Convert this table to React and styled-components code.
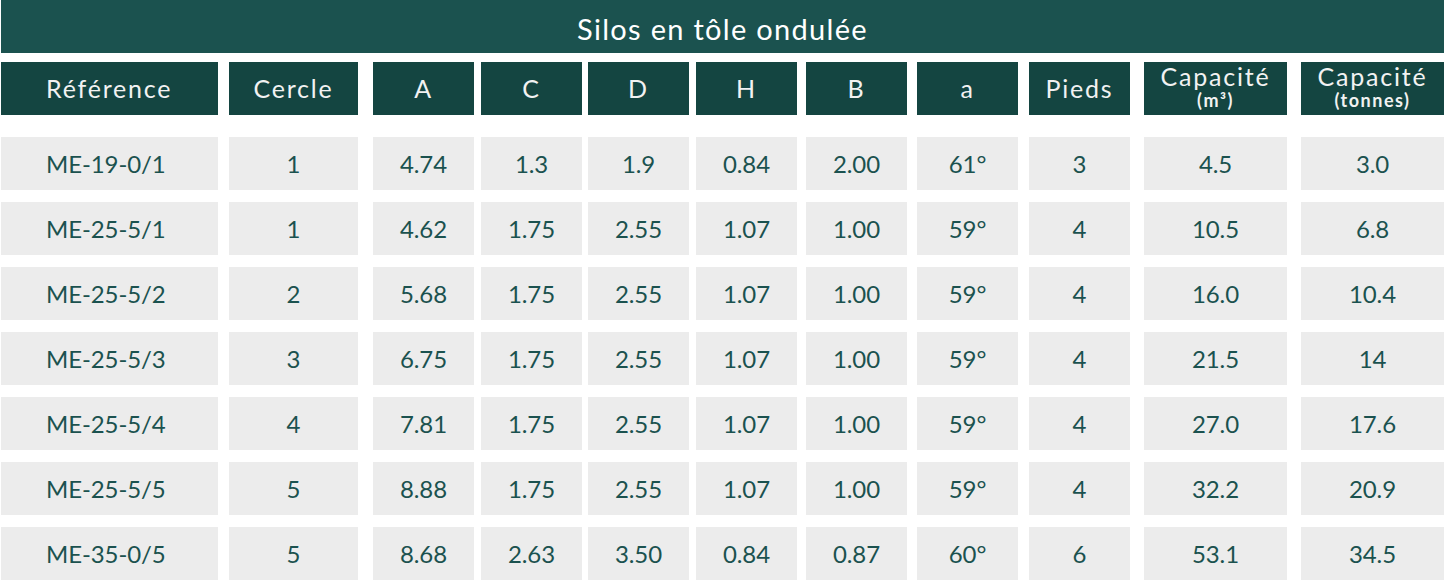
import React from "react";
import styled, { createGlobalStyle } from "styled-components";

const GlobalStyle = createGlobalStyle`
  html, body { margin: 0; padding: 0; background: #ffffff; }
  body { font-family: Lato, "Open Sans", sans-serif; }
`;

const Page = styled.div`
  width: 1443px;
  padding-left: 1px;
  display: flex;
  flex-direction: column;
`;

const TitleBar = styled.div`
  height: 53px;
  background: #1b524f;
  color: #ffffff;
  display: flex;
  align-items: center;
  justify-content: center;
  font-size: 29px;
  letter-spacing: 1.3px;
  padding-top: 4px;
  box-sizing: border-box;
`;

const Table = styled.div`
  display: flex;
  flex-direction: column;
  gap: 12px;
  margin-top: 9px;
`;

const Row = styled.div`
  display: flex;
  height: 53px;
  margin-bottom: ${(p) => (p.$head ? "10px" : "0")};
`;

const Cell = styled.div`
  width: ${(p) => p.$w}px;
  margin-left: ${(p) => p.$gap}px;
  flex: none;
  box-sizing: border-box;
  display: flex;
  flex-direction: column;
  align-items: ${(p) => (p.$left ? "flex-start" : "center")};
  justify-content: center;
  padding-left: ${(p) => (p.$left ? "45px" : "0")};
  line-height: 1;
  white-space: nowrap;
`;

const HeadCell = styled(Cell)`
  background: #144541;
  color: #f2f2f2;
  font-size: 25px;
  letter-spacing: 1.8px;
`;

const DataCell = styled(Cell)`
  background: #ececec;
  color: #1b524f;
  font-size: 24px;
  letter-spacing: -0.1px;
`;

const SubLabel = styled.span`
  font-size: 18px;
  line-height: 18px;
  font-weight: 700;
  letter-spacing: 1.5px;
  margin-top: 2px;
`;

const StackLabel = styled.span`
  margin-top: -4px;
`;

const columns = [
  { w: 217, gap: 0, left: true, label: "Référence" },
  { w: 129, gap: 11, label: "Cercle" },
  { w: 101, gap: 15, label: "A" },
  { w: 101, gap: 7, label: "C" },
  { w: 101, gap: 6, label: "D" },
  { w: 101, gap: 7, label: "H" },
  { w: 101, gap: 9, label: "B" },
  { w: 101, gap: 10, label: "a" },
  { w: 101, gap: 11, label: "Pieds" },
  { w: 143, gap: 14, label: "Capacité", sub: "(m³)" },
  { w: 143, gap: 14, label: "Capacité", sub: "(tonnes)" },
];

const rows = [
  ["ME-19-0/1", "1", "4.74", "1.3", "1.9", "0.84", "2.00", "61°", "3", "4.5", "3.0"],
  ["ME-25-5/1", "1", "4.62", "1.75", "2.55", "1.07", "1.00", "59°", "4", "10.5", "6.8"],
  ["ME-25-5/2", "2", "5.68", "1.75", "2.55", "1.07", "1.00", "59°", "4", "16.0", "10.4"],
  ["ME-25-5/3", "3", "6.75", "1.75", "2.55", "1.07", "1.00", "59°", "4", "21.5", "14"],
  ["ME-25-5/4", "4", "7.81", "1.75", "2.55", "1.07", "1.00", "59°", "4", "27.0", "17.6"],
  ["ME-25-5/5", "5", "8.88", "1.75", "2.55", "1.07", "1.00", "59°", "4", "32.2", "20.9"],
  ["ME-35-0/5", "5", "8.68", "2.63", "3.50", "0.84", "0.87", "60°", "6", "53.1", "34.5"],
];

export default function App() {
  return (
    <>
      <GlobalStyle />
      <Page>
        <TitleBar>Silos en tôle ondulée</TitleBar>
        <Table>
          <Row $head>
            {columns.map((c, i) => (
              <HeadCell key={i} $w={c.w} $gap={c.gap} $left={c.left}>
                {c.sub ? (
                  <>
                    <StackLabel>{c.label}</StackLabel>
                    <SubLabel>{c.sub}</SubLabel>
                  </>
                ) : (
                  c.label
                )}
              </HeadCell>
            ))}
          </Row>
          {rows.map((r, ri) => (
            <Row key={ri}>
              {r.map((v, ci) => (
                <DataCell
                  key={ci}
                  $w={columns[ci].w}
                  $gap={columns[ci].gap}
                  $left={columns[ci].left}
                >
                  {v}
                </DataCell>
              ))}
            </Row>
          ))}
        </Table>
      </Page>
    </>
  );
}
